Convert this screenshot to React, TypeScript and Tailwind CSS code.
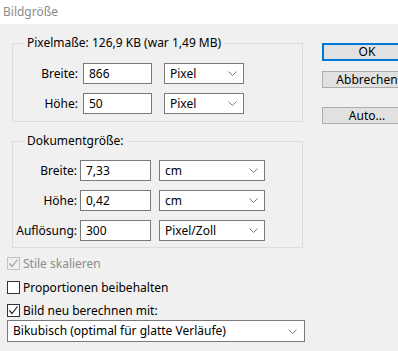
import React from "react";

const Chevron = () => (
  <svg width="9" height="5" viewBox="0 0 9 5" className="shrink-0">
    <path d="M0.5 0.5 L4.5 4.5 L8.5 0.5" fill="none" stroke="#7a7a7a" strokeWidth="1" />
  </svg>
);

const Field = ({ value, w }: { value: string; w: string }) => (
  <div className={`h-[21px] ${w} border border-[#7a7a7a] bg-white flex items-center pl-[5px] text-black`}>
    {value}
  </div>
);

const Select = ({ value, w }: { value: string; w: string }) => (
  <div className={`h-[21px] ${w} border border-[#7a7a7a] bg-white flex items-center justify-between pl-[5px] pr-[6px] text-black`}>
    <span>{value}</span>
    <Chevron />
  </div>
);

const Row = ({ label, value, unit, lw, fw, sw, gap }: { label: string; value: string; unit: string; lw: string; fw: string; sw: string; gap: string }) => (
  <div className="flex items-center">
    <div className={`${lw} text-right text-black`}>{label}</div>
    <Field value={value} w={fw} />
    <div className={gap} />
    <Select value={unit} w={sw} />
  </div>
);

const Check = ({ color }: { color: string }) => (
  <svg width="11" height="11" viewBox="0 0 11 11">
    <path d="M1.5 5.5 L4 8.5 L9.5 1.5" fill="none" stroke={color} strokeWidth="1.2" />
  </svg>
);

export default function App() {
  return (
    <div
      className="w-[398px] h-[351px] overflow-hidden bg-[#f0f0f0] text-[12px] leading-[16px] text-black"
      style={{ fontFamily: '"Segoe UI", "Noto Sans", sans-serif' }}
    >
      <div className="h-[24px] bg-white flex items-center pl-[3px] text-[#8a8a8a]">Bildgröße</div>
      <div className="flex">
        <div className="w-[303px] shrink-0 pl-[12px] pt-[11px] flex flex-col">
          <fieldset className="border border-[#dcdcdc] pb-[7px]">
            <legend className="ml-[10px] px-[4px]">Pixelmaße: 126,9 KB (war 1,49 MB)</legend>
            <div className="flex flex-col gap-[9px] pt-[12px]">
              <Row label="Breite:" value="866" unit="Pixel" lw="w-[70px] pr-[5px]" fw="w-[69px]" sw="w-[80px]" gap="w-[12px]" />
              <Row label="Höhe:" value="50" unit="Pixel" lw="w-[70px] pr-[5px]" fw="w-[69px]" sw="w-[80px]" gap="w-[12px]" />
            </div>
          </fieldset>
          <fieldset className="border border-[#dcdcdc] pb-[6px] mt-[11px]">
            <legend className="ml-[10px] px-[4px]">Dokumentgröße:</legend>
            <div className="flex flex-col gap-[9px] pt-[11px]">
              <Row label="Breite:" value="7,33" unit="cm" lw="w-[67px] pr-[3px]" fw="w-[71px]" sw="w-[106px]" gap="w-[8px]" />
              <Row label="Höhe:" value="0,42" unit="cm" lw="w-[67px] pr-[3px]" fw="w-[71px]" sw="w-[106px]" gap="w-[8px]" />
              <Row label="Auflösung:" value="300" unit="Pixel/Zoll" lw="w-[67px] pr-[3px]" fw="w-[71px]" sw="w-[106px]" gap="w-[8px]" />
            </div>
          </fieldset>
        </div>
        <div className="ml-[19px] pt-[19px] flex flex-col shrink-0">
          <div className="w-[90px] h-[18px] border-2 border-[#0078d7] bg-[#e1e1e1] flex items-center justify-center">OK</div>
          <div className="w-[90px] h-[17px] mt-[10px] border border-[#adadad] bg-[#e1e1e1] flex items-center justify-center">Abbrechen</div>
          <div className="w-[90px] h-[17px] mt-[19px] border border-[#adadad] bg-[#e1e1e1] flex items-center justify-center">Auto...</div>
        </div>
      </div>
      <div className="pl-[7px] flex flex-col">
        <div className="mt-[8px] h-[15px] flex items-center gap-[3px] text-[#8d8d8d]">
          <div className="w-[13px] h-[13px] border border-[#c3c3c3] bg-[#f0f0f0] flex items-center justify-center">
            <Check color="#a0a0a0" />
          </div>
          <span>Stile skalieren</span>
        </div>
        <div className="mt-[9px] h-[15px] flex items-center gap-[3px]">
          <div className="w-[13px] h-[13px] border border-[#333] bg-white" />
          <span>Proportionen beibehalten</span>
        </div>
        <div className="mt-[8px] h-[15px] flex items-center gap-[3px]">
          <div className="w-[13px] h-[13px] border border-[#333] bg-white flex items-center justify-center">
            <Check color="#222" />
          </div>
          <span>Bild neu berechnen mit:</span>
        </div>
        <div className="mt-[2px] w-[298px] h-[22px] border border-[#7a7a7a] bg-white flex items-center justify-between pl-[5px] pr-[7px]">
          <span>Bikubisch (optimal für glatte Verläufe)</span>
          <Chevron />
        </div>
      </div>
    </div>
  );
}
